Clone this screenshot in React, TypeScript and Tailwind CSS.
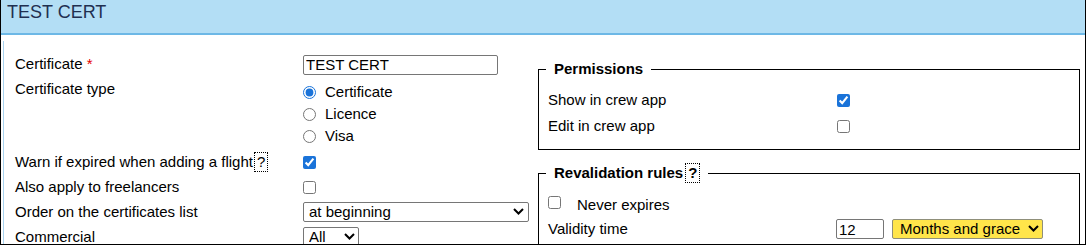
import { useState } from "react";

function Chevron({ className }: { className?: string }) {
  return (
    <svg className={className} width="11" height="7" viewBox="0 0 11 7" fill="none">
      <path d="M1 1l4.5 4.5L10 1" stroke="#000" strokeWidth="2" />
    </svg>
  );
}

function Help({ bold }: { bold?: boolean }) {
  return (
    <span
      className={`inline-block border border-dotted border-black px-[2px] leading-[18px] ${
        bold ? "font-bold" : "font-normal"
      }`}
    >
      ?
    </span>
  );
}

export default function App() {
  const [name, setName] = useState("TEST CERT");
  const [type, setType] = useState("Certificate");
  const [warn, setWarn] = useState(true);
  const [freelancers, setFreelancers] = useState(false);
  const [order, setOrder] = useState("at beginning");
  const [commercial, setCommercial] = useState("All");
  const [showApp, setShowApp] = useState(true);
  const [editApp, setEditApp] = useState(false);
  const [never, setNever] = useState(false);
  const [validity, setValidity] = useState("12");
  const [unit, setUnit] = useState("Months and grace");

  return (
    <div className="h-[245px] w-[1086px] overflow-hidden border-x border-b border-black bg-white font-['Liberation_Sans',Arial,sans-serif] text-[15px] text-black">
      <div className="h-[35px] border-b-2 border-[#6db8e6] bg-[#b3def5] pl-[6px] pt-[1px] text-[18px] leading-[22px] text-[#1f2f50]">
        TEST CERT
      </div>

      <div className="ml-[2px] mt-[6px] flex border-l border-[#a9d3ef] pl-[11px] pt-[11px]">
        {/* left column */}
        <div className="w-[523px] shrink-0">
          <div className="flex h-[25px] items-center">
            <div className="w-[288px]">
              Certificate <span className="text-[#e60000]">*</span>
            </div>
            <input
              className="h-[20px] w-[195px] rounded-[2px] border border-[#767676] px-[2px] leading-[18px]"
              value={name}
              onChange={(e) => setName(e.target.value)}
            />
          </div>

          <div className="flex h-[73px]">
            <div className="w-[288px] leading-[24px]">Certificate type</div>
            <div className="pt-[4px]">
              {["Certificate", "Licence", "Visa"].map((t) => (
                <label key={t} className="flex h-[22px] items-center gap-[9px]">
                  <input
                    type="radio"
                    name="type"
                    className="accent-[#1a73d9]"
                    checked={type === t}
                    onChange={() => setType(t)}
                  />
                  {t}
                </label>
              ))}
            </div>
          </div>

          <div className="flex h-[25px] items-center">
            <div className="w-[288px]">
              Warn if expired when adding a flight
              <span className="ml-[1px]">
                <Help />
              </span>
            </div>
            <input
              type="checkbox"
              className="accent-[#1a73d9]"
              checked={warn}
              onChange={(e) => setWarn(e.target.checked)}
            />
          </div>

          <div className="flex h-[25px] items-center">
            <div className="w-[288px]">Also apply to freelancers</div>
            <input
              type="checkbox"
              className="accent-[#1a73d9]"
              checked={freelancers}
              onChange={(e) => setFreelancers(e.target.checked)}
            />
          </div>

          <div className="flex h-[25px] items-center">
            <div className="w-[288px]">Order on the certificates list</div>
            <div className="relative w-[226px]">
              <select
                className="h-[20px] w-full appearance-none rounded-[2px] border border-[#767676] bg-white pl-[5px] leading-[18px]"
                value={order}
                onChange={(e) => setOrder(e.target.value)}
              >
                <option>at beginning</option>
                <option>at end</option>
              </select>
              <Chevron className="pointer-events-none absolute right-[5px] top-[7px]" />
            </div>
          </div>

          <div className="flex h-[25px] items-center">
            <div className="w-[288px]">Commercial</div>
            <div className="relative w-[56px]">
              <select
                className="h-[20px] w-full appearance-none rounded-[2px] border border-[#767676] bg-white pl-[5px] leading-[18px]"
                value={commercial}
                onChange={(e) => setCommercial(e.target.value)}
              >
                <option>All</option>
                <option>Yes</option>
                <option>No</option>
              </select>
              <Chevron className="pointer-events-none absolute right-[4px] top-[7px]" />
            </div>
          </div>
        </div>

        {/* right column */}
        <div className="w-[542px] shrink-0 pt-[8px]">
          <fieldset className="border border-black px-[9px] pb-[10px]">
            <legend className="-ml-[2px] px-2 font-bold leading-[18px]">Permissions</legend>
            <div className="pt-[9px]">
              <div className="flex h-[26px] items-center">
                <span className="w-[289px]">Show in crew app</span>
                <input
                  type="checkbox"
                  className="accent-[#1a73d9]"
                  checked={showApp}
                  onChange={(e) => setShowApp(e.target.checked)}
                />
              </div>
              <div className="flex h-[26px] items-center">
                <span className="w-[289px]">Edit in crew app</span>
                <input
                  type="checkbox"
                  className="accent-[#1a73d9]"
                  checked={editApp}
                  onChange={(e) => setEditApp(e.target.checked)}
                />
              </div>
            </div>
          </fieldset>

          <fieldset className="mt-[13px] border border-black px-[9px] pb-[30px]">
            <legend className="-ml-[2px] px-2 font-bold leading-[20px]">
              Revalidation rules
              <span className="ml-[2px]">
                <Help bold />
              </span>
            </legend>
            <div className="pt-[11px]">
              <label className="flex h-[22px] items-center gap-[16px]">
                <input
                  type="checkbox"
                  className="-translate-y-[3px] accent-[#1a73d9]"
                  checked={never}
                  onChange={(e) => setNever(e.target.checked)}
                />
                Never expires
              </label>
              <div className="mt-[1px] flex h-[24px] items-center">
                <span className="w-[288px]">Validity time</span>
                <input
                  className="h-[20px] w-[48px] rounded-[2px] border border-[#767676] px-[2px] leading-[18px]"
                  value={validity}
                  onChange={(e) => setValidity(e.target.value)}
                />
                <div className="relative ml-[8px] w-[151px]">
                  <select
                    className="h-[20px] w-full appearance-none rounded-[2px] border border-[#8f8f7a] bg-[#ffe54a] pl-[7px] leading-[18px]"
                    value={unit}
                    onChange={(e) => setUnit(e.target.value)}
                  >
                    <option>Months and grace</option>
                    <option>Months</option>
                    <option>Days</option>
                  </select>
                  <Chevron className="pointer-events-none absolute right-[4px] top-[7px]" />
                </div>
              </div>
            </div>
          </fieldset>
        </div>
      </div>
    </div>
  );
}
